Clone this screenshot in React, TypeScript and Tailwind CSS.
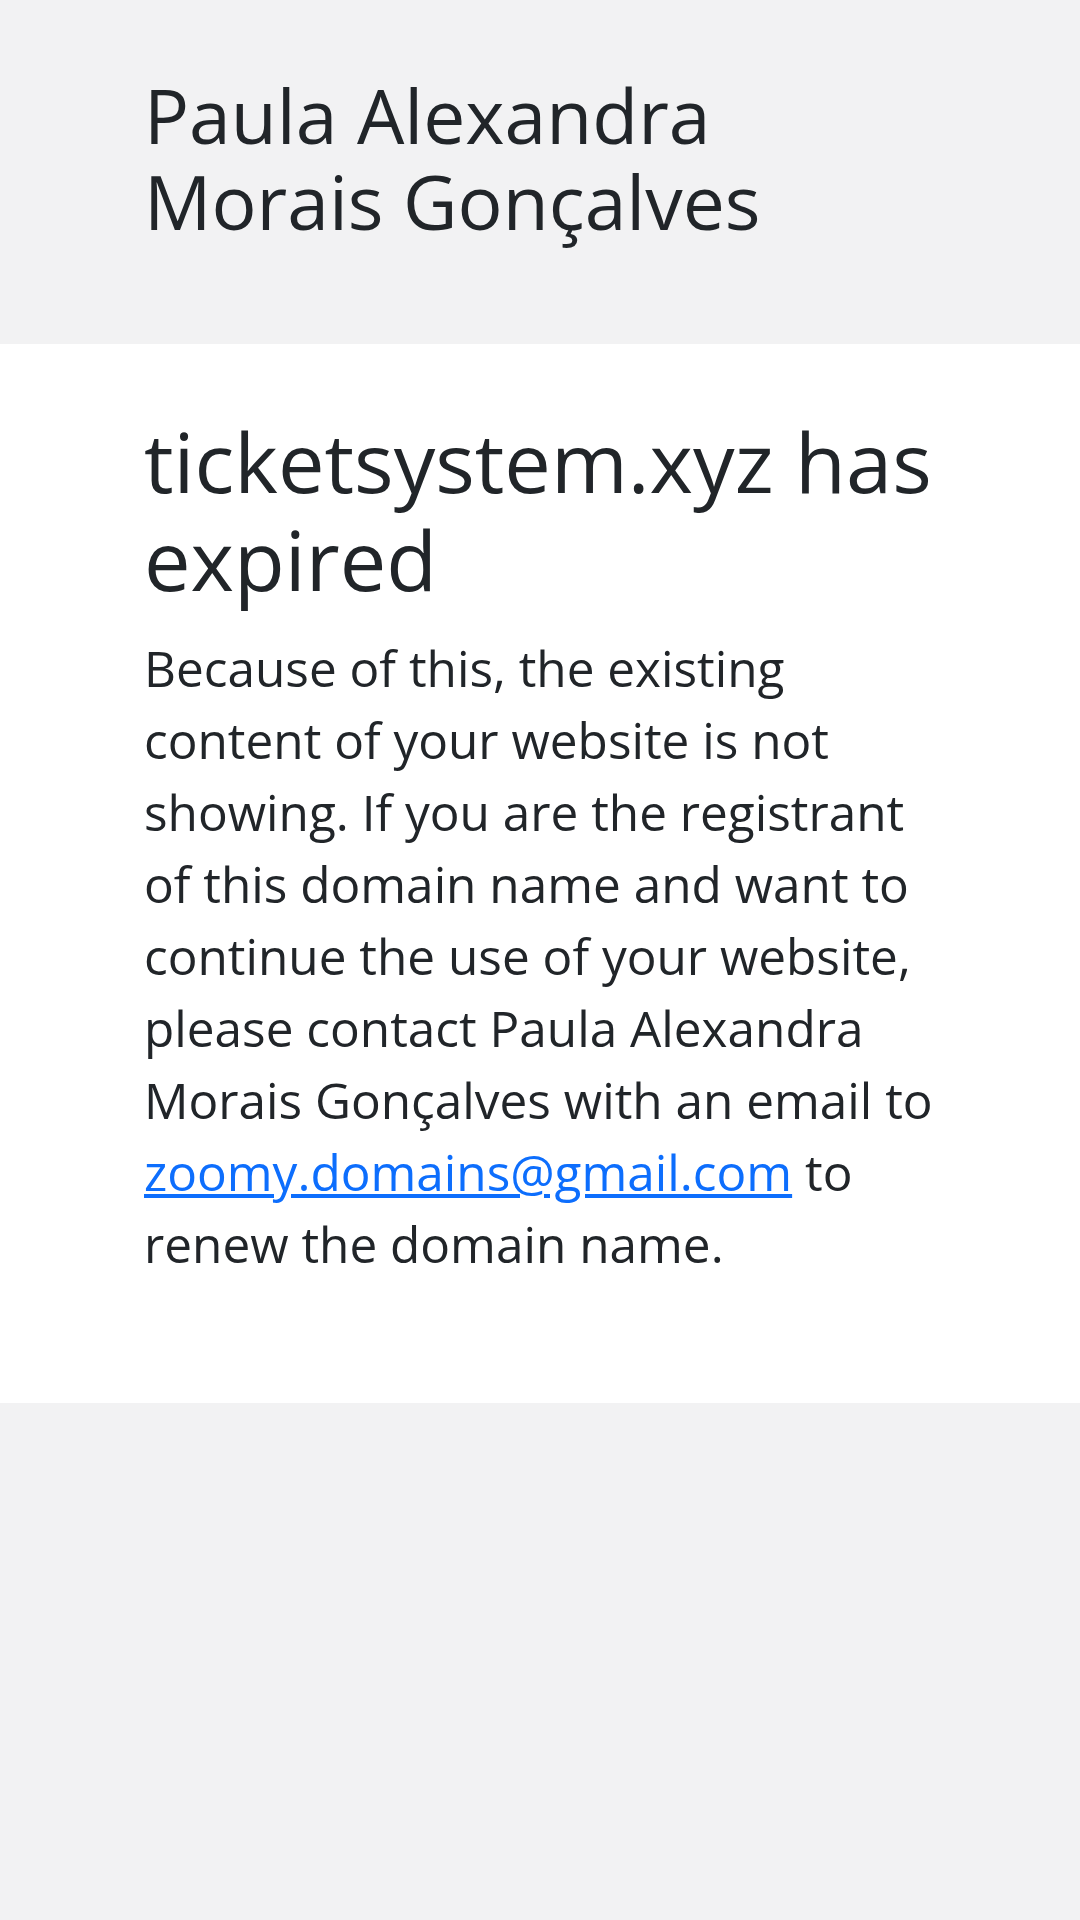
import React from "react";

export default function App() {
  const font = { fontFamily: '"Open Sans", "Noto Sans", sans-serif' };
  return (
    <div className="min-h-[1920px] bg-[#f2f2f3] text-[#212529]" style={font}>
      <header className="bg-[#f2f2f3] h-[344px] pt-[72px] pl-[144px] pr-[100px]">
        <div className="text-[75px] leading-[86px] font-normal whitespace-nowrap">
          Paula Alexandra
          <br />
          Morais Gonçalves
        </div>
      </header>
      <main className="bg-white h-[1059px] pl-[144px] pr-[60px] pt-[68px]">
        <h1 className="text-[83px] leading-[98px] font-normal whitespace-nowrap">
          ticketsystem.xyz has
          <br />
          expired
        </h1>
        <p className="text-[49.5px] leading-[72px] mt-[24px] whitespace-nowrap">
          Because of this, the existing
          <br />
          content of your website is not
          <br />
          showing. If you are the registrant
          <br />
          of this domain name and want to
          <br />
          continue the use of your website,
          <br />
          please contact Paula Alexandra
          <br />
          Morais Gonçalves with an email to
          <br />
          <a href="#" className="text-[#0d6efd] underline">
            zoomy.domains@gmail.com
          </a>{" "}
          to
          <br />
          renew the domain name.
        </p>
      </main>
    </div>
  );
}
